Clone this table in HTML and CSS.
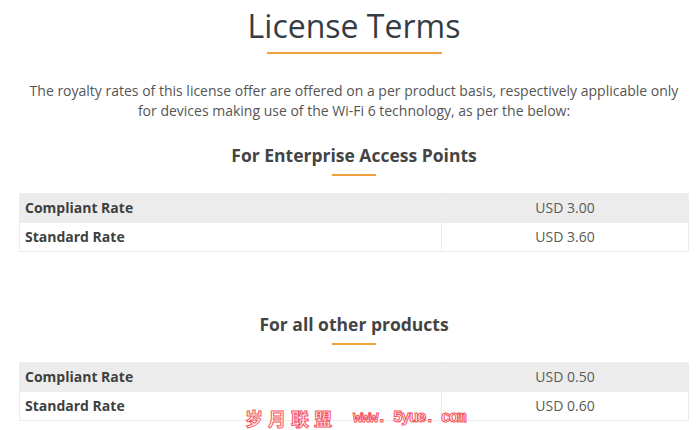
FILE: index.html
```html
<!DOCTYPE html>
<html>
<head>
<meta charset="utf-8">
<link rel="stylesheet" href="styles.css">
</head>
<body>
<main class="page">
  <h1 class="title">License Terms</h1>
  <div class="rule rule-wide"></div>
  <p class="intro">The royalty rates of this license offer are offered on a per product basis, respectively applicable only for devices making use of the Wi-Fi 6 technology, as per the below:</p>

  <section class="block">
    <h2 class="sub">For Enterprise Access Points</h2>
    <div class="rule rule-short"></div>
    <table class="rates">
      <tr class="shade"><td class="label">Compliant Rate</td><td class="value">USD 3.00</td></tr>
      <tr><td class="label">Standard Rate</td><td class="value">USD 3.60</td></tr>
    </table>
  </section>

  <section class="block block-next">
    <h2 class="sub">For all other products</h2>
    <div class="rule rule-short"></div>
    <table class="rates">
      <tr class="shade"><td class="label">Compliant Rate</td><td class="value">USD 0.50</td></tr>
      <tr><td class="label">Standard Rate</td><td class="value">USD 0.60</td></tr>
    </table>
  </section>
</main>
<div class="watermark"><span class="wm-cn">岁月联盟</span><span class="wm-url">www. 5yue. com</span></div>
</body>
</html>
```

FILE: styles.css
```css
html, body {
  margin: 0;
  padding: 0;
  background: #ffffff;
}
body {
  font-family: "Open Sans", "Liberation Sans", sans-serif;
  color: #555555;
  width: 700px;
  height: 430px;
  overflow: hidden;
  position: relative;
}
.page {
  padding: 0 11px 0 19px;
  display: flex;
  flex-direction: column;
  align-items: center;
}
.title {
  margin: 7px 0 0;
  font-size: 32px;
  line-height: 38px;
  font-weight: 500;
  color: #363c44;
}
.rule {
  height: 2px;
  background: #f0a23a;
}
.rule-wide {
  width: 175px;
  margin-top: 7px;
}
.intro {
  margin: 27px 0 0;
  font-size: 14px;
  line-height: 20px;
  text-align: center;
  color: #555555;
  width: 660px;
}
.block {
  width: 100%;
  display: flex;
  flex-direction: column;
  align-items: center;
}
.block:first-of-type {
  margin-top: 22px;
}
.block-next {
  margin-top: 60px;
}
.sub {
  margin: 0;
  font-size: 17.5px;
  line-height: 24px;
  font-weight: 700;
  color: #444444;
}
.rule-short {
  width: 44px;
  margin-top: 7px;
}
.rates {
  margin-top: 17px;
  width: 670px;
  border-collapse: collapse;
  font-size: 14px;
}
.rates td {
  border: 1px solid #ededed;
  padding: 4px 5px;
  line-height: 20px;
  height: 20px;
}
.shade td {
  background: #ececec;
}
.label {
  width: 411px;
  font-weight: 700;
  color: #3f3f3f;
}
.value {
  text-align: center;
  color: #5a5a5a;
}
.watermark {
  position: absolute;
  left: 245px;
  top: 407px;
  display: flex;
  align-items: center;
  gap: 16px;
  color: #ffffff;
  -webkit-text-stroke: 1px #f4545c;
}
.wm-cn {
  font-family: "Noto Sans CJK SC", sans-serif;
  font-weight: 700;
  font-size: 18px;
  line-height: 22px;
  letter-spacing: 5px;
}
.wm-url {
  font-family: "Liberation Mono", monospace;
  font-weight: 700;
  font-size: 16px;
  line-height: 22px;
  letter-spacing: -1.6px;
}
```
